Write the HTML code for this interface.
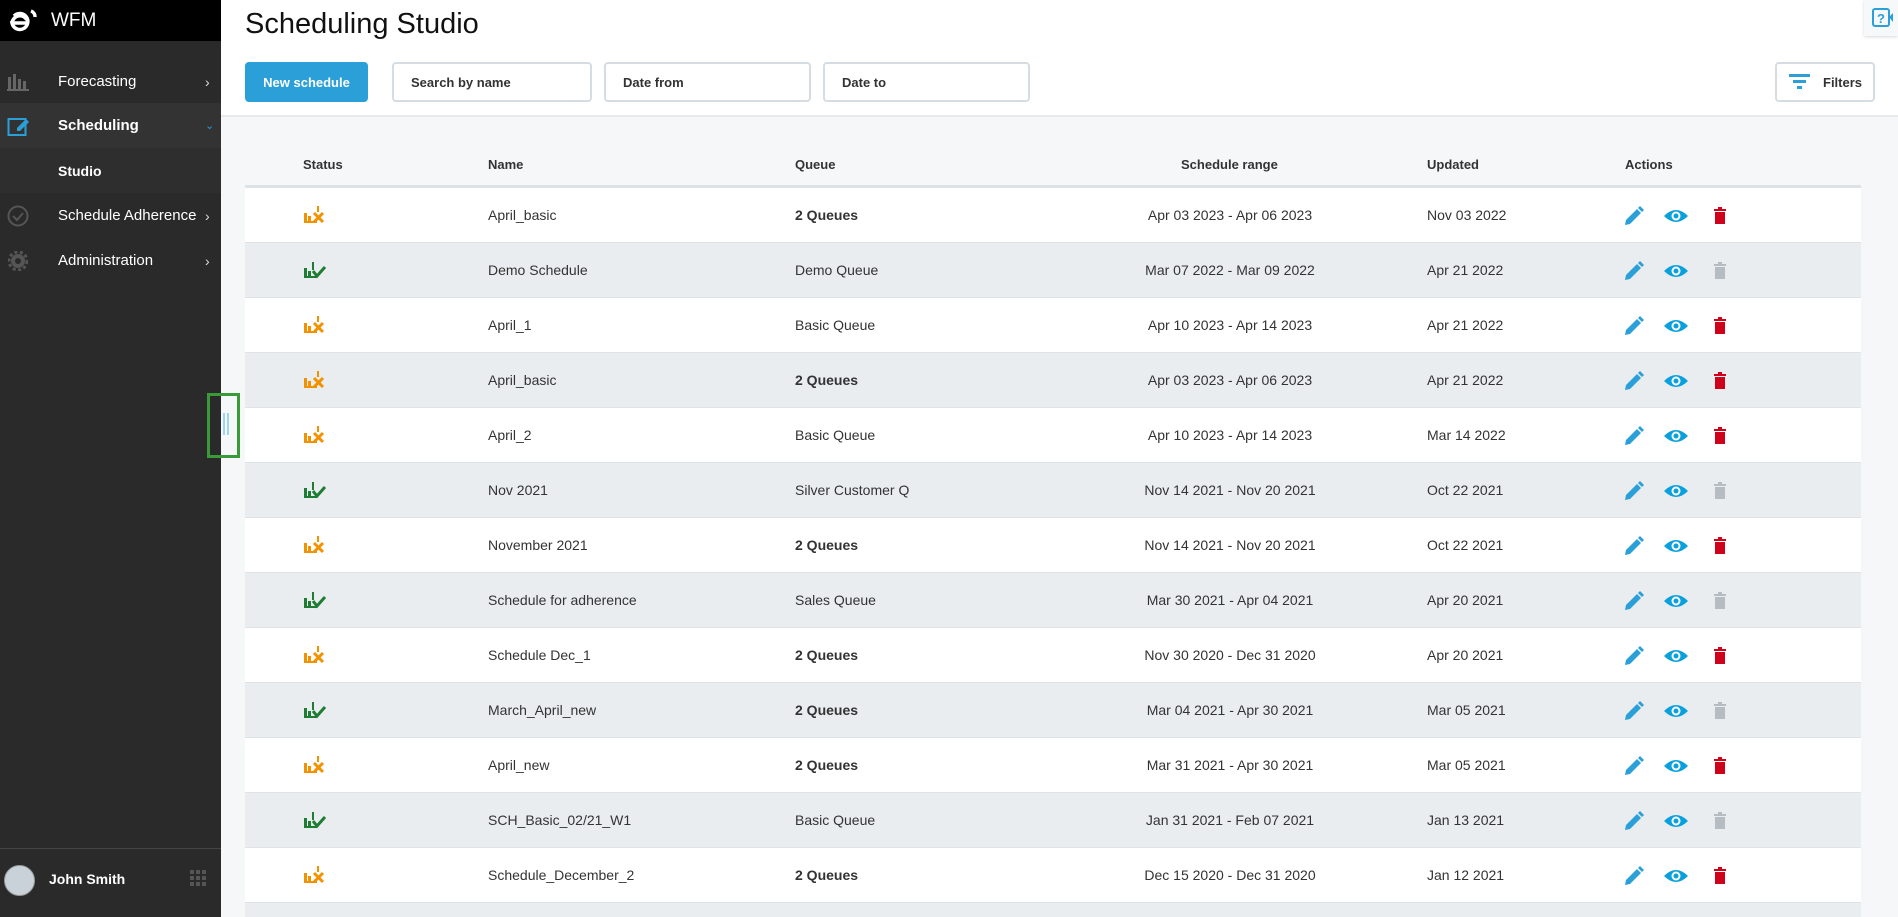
<!DOCTYPE html>
<html style="width:1898px;height:917px;overflow:hidden"><head><meta charset="utf-8"><style>
*{box-sizing:border-box;margin:0;padding:0}
body{width:1898px;height:917px;overflow:hidden;font-family:"Liberation Sans",sans-serif;background:#fff;position:relative;color:#333}
.sb{position:absolute;left:0;top:0;width:221px;height:917px;background:#2a2a2a;color:#fff;z-index:2}
.logo{height:41px;background:#000;position:relative}
.logo .t{position:absolute;left:51px;top:10px;font-size:19px;color:#fff}
.item{position:absolute;left:0;width:221px;height:45px;font-size:15px;display:flex;align-items:center}
.item .l{position:absolute;left:58px}
.item .ch{position:absolute;left:205px;font-size:14px;color:#ddd}
.main{position:absolute;left:221px;top:0;right:0;height:917px;overflow:hidden}
h1{position:absolute;left:24px;top:8px;font-weight:400;font-size:29px;color:#111}
.btn{position:absolute;top:62px;height:40px;border-radius:4px;font-size:13px;font-weight:bold;display:flex;align-items:center}
.inp{border:2px solid #d5dde2;color:#333;padding-left:17px;background:#fff}
.content{position:absolute;left:0;top:115px;right:0;bottom:0;background:#f5f7f9;border-top:2px solid #e6eaed;overflow:hidden}
.tbl{position:absolute;left:24px;top:0;width:1616px}
.hd{position:relative;height:71px;border-bottom:3px solid #dde2e6;font-size:13px;font-weight:bold;color:#333}
.hd span,.row span{position:absolute}
.hd span{top:40px}
.row{position:relative;height:55px;border-bottom:1px solid #dfe3e6;background:#fff;font-size:14px;color:#333}
.row.g{background:#e9edf0}
.row span{top:19px}
</style></head><body>
<div class="sb">
 <div class="logo">
  <svg style="position:absolute;left:7px;top:8px" width="30" height="26" viewBox="0 0 30 26"><path d="M20 15H5a8 8 0 1 0 2-7" fill="none" stroke="#fff" stroke-width="3.5"/><path d="M5 15 a8 8 0 0 1 15-3" fill="none" stroke="#fff" stroke-width="3.5"/><path d="M24 3a6 6 0 0 1 4 6" fill="none" stroke="#fff" stroke-width="3.5"/></svg>
  <span class="t">WFM</span></div>
 <div class="item" style="top:59px"><svg style="position:absolute;left:7px" width="22" height="18"><g fill="#666"><rect x="1" y="4" width="3" height="12"/><rect x="6" y="1" width="3" height="15"/><rect x="11" y="6" width="3" height="10"/><rect x="16" y="8" width="3" height="8"/><rect x="0" y="16" width="22" height="2"/></g></svg><span class="l">Forecasting</span><span class="ch">›</span></div>
 <div class="item" style="top:103px;background:#333"><svg style="position:absolute;left:7px" width="24" height="22"><rect x="1.5" y="4" width="17" height="16" fill="none" stroke="#2a9fd8" stroke-width="2"/><path d="M10 13l9-9 3 3-9 9h-3z" fill="#2a9fd8"/></svg><span class="l" style="font-weight:bold">Scheduling</span><span class="ch" style="color:#2a9fd8;font-size:11px">⌄</span></div>
 <div class="item" style="top:148px;background:#2e2e2e"><span class="l" style="font-weight:bold;font-size:14px">Studio</span></div>
 <div class="item" style="top:193px"><svg style="position:absolute;left:7px" width="22" height="22"><circle cx="11" cy="11" r="9.5" fill="none" stroke="#555" stroke-width="2"/><path d="M6 11l4 4 6-7" fill="none" stroke="#555" stroke-width="2"/></svg><span class="l">Schedule Adherence</span><span class="ch">›</span></div>
 <div class="item" style="top:238px"><svg style="position:absolute;left:8px" width="20" height="20"><circle cx="10" cy="10" r="7" fill="#555"/><circle cx="10" cy="10" r="9" fill="none" stroke="#555" stroke-width="3" stroke-dasharray="3 2.5"/><circle cx="10" cy="10" r="3" fill="#2a2a2a"/></svg><span class="l">Administration</span><span class="ch">›</span></div>
 <div style="position:absolute;left:0;top:848px;width:221px;border-top:1px solid #444;height:69px">
  <div style="position:absolute;left:4px;top:16px;width:31px;height:31px;border-radius:50%;background:#c9d2d8;border:1px solid #999"></div>
  <span style="position:absolute;left:49px;top:22px;font-size:14px;font-weight:bold">John Smith</span>
  <svg style="position:absolute;left:190px;top:21px" width="18" height="18"><g fill="#555"><rect x="0" y="0" width="4" height="4"/><rect x="6" y="0" width="4" height="4"/><rect x="12" y="0" width="4" height="4"/><rect x="0" y="6" width="4" height="4"/><rect x="6" y="6" width="4" height="4"/><rect x="12" y="6" width="4" height="4"/><rect x="0" y="12" width="4" height="4"/><rect x="6" y="12" width="4" height="4"/><rect x="12" y="12" width="4" height="4"/></g></svg>
 </div>
</div>
<div class="main">
 <h1>Scheduling Studio</h1>
 <div class="btn" style="left:24px;width:123px;background:#2a9fd8;color:#fff;justify-content:center">New schedule</div>
 <div class="btn inp" style="left:171px;width:200px">Search by name</div>
 <div class="btn inp" style="left:383px;width:207px">Date from</div>
 <div class="btn inp" style="left:602px;width:207px">Date to</div>
 <div class="btn inp" style="left:1554px;width:100px;padding-left:12px"><svg width="22" height="16" style="margin-right:12px"><g fill="#2a9fd8"><rect x="0" y="0" width="21" height="3"/><rect x="4" y="6" width="13" height="3"/><rect x="8" y="12" width="5" height="3"/></g></svg>Filters</div>
 <div style="position:absolute;right:0;top:0;width:34px;height:36px;background:#f7f8f9;box-shadow:0 1px 3px rgba(0,0,0,.15)"><svg style="position:absolute;left:8px;top:8px" width="22" height="20"><rect x="1" y="1" width="16" height="17" rx="2" fill="none" stroke="#2a9fd8" stroke-width="2"/><text x="5" y="15" font-size="13" font-weight="bold" fill="#2a9fd8" font-family="Liberation Sans">?</text><path d="M17 9l4-4v9z" fill="#2a9fd8"/></svg></div>
 <div class="content"><div class="tbl" id="t">
  <div class="hd"><span style="left:58px">Status</span><span style="left:243px">Name</span><span style="left:550px">Queue</span><span style="left:936px">Schedule range</span><span style="left:1182px">Updated</span><span style="left:1380px">Actions</span></div>
 </div></div>
</div>
<div style="position:absolute;left:207px;top:393px;width:33px;height:65px;border:3px solid #3a9a3a;z-index:3;background:linear-gradient(90deg,transparent 11px,#f5f7f9 11px)"><div style="position:absolute;left:13px;top:17px;width:2px;height:22px;background:#9cd6f2"></div><div style="position:absolute;left:17px;top:17px;width:2px;height:22px;background:#9cd6f2"></div></div>
<script>
const R=[["o","April_basic","2 Queues","Apr 03 2023 - Apr 06 2023","Nov 03 2022"],["g","Demo Schedule","Demo Queue","Mar 07 2022 - Mar 09 2022","Apr 21 2022"],["o","April_1","Basic Queue","Apr 10 2023 - Apr 14 2023","Apr 21 2022"],["o","April_basic","2 Queues","Apr 03 2023 - Apr 06 2023","Apr 21 2022"],["o","April_2","Basic Queue","Apr 10 2023 - Apr 14 2023","Mar 14 2022"],["g","Nov 2021","Silver Customer Q","Nov 14 2021 - Nov 20 2021","Oct 22 2021"],["o","November 2021","2 Queues","Nov 14 2021 - Nov 20 2021","Oct 22 2021"],["g","Schedule for adherence","Sales Queue","Mar 30 2021 - Apr 04 2021","Apr 20 2021"],["o","Schedule Dec_1","2 Queues","Nov 30 2020 - Dec 31 2020","Apr 20 2021"],["g","March_April_new","2 Queues","Mar 04 2021 - Apr 30 2021","Mar 05 2021"],["o","April_new","2 Queues","Mar 31 2021 - Apr 30 2021","Mar 05 2021"],["g","SCH_Basic_02/21_W1","Basic Queue","Jan 31 2021 - Feb 07 2021","Jan 13 2021"],["o","Schedule_December_2","2 Queues","Dec 15 2020 - Dec 31 2020","Jan 12 2021"],["g","","","",""]];
let h="";
R.forEach((r,i)=>{const c=r[0]=="o"?"#f39200":"#1e7d32";
const st=r[1]?`<svg style="position:absolute;left:59px;top:18px" width="22" height="18"><g fill="${c}"><rect x="0" y="7" width="3" height="8"/><rect x="4" y="10" width="3" height="5"/><rect x="0" y="15" width="13" height="2"/></g>${r[0]=="o"?`<path d="M10 7l9 9M19 7l-9 9" stroke="${c}" stroke-width="3"/><path d="M14 0v6" stroke="${c}" stroke-width="2"/>`:`<path d="M9 10l4 5 8-9" fill="none" stroke="${c}" stroke-width="3"/><rect x="8" y="1" width="2" height="8" fill="${c}"/>`}</svg>`:"";
const tc=r[0]=="o"?"#d0021b":"#b5bcc2";
const act=r[1]?`<svg style="position:absolute;left:1379px;top:18px" width="110" height="20"><path d="M1 19l1-5 11-11 4 4-11 11z" fill="#2a9fd8"/><path d="M14 2l2-2 4 4-2 2z" fill="#2a9fd8"/><path d="M40 10q12-12 24 0q-12 12-24 0z" fill="#0aa0dc"/><circle cx="52" cy="10" r="4.5" fill="#fff"/><circle cx="52" cy="10" r="2.5" fill="#0aa0dc"/><rect x="90" y="3" width="12" height="2" fill="${tc}"/><rect x="94" y="1" width="4" height="2" fill="${tc}"/><rect x="91" y="6" width="10" height="12" fill="${tc}"/></svg>`:"";
h+=`<div class="row ${i%2?"g":""}">${st}<span style="left:243px">${r[1]}</span><span style="left:550px;${r[2]=="2 Queues"?"font-weight:bold":""}">${r[2]}</span><span style="left:896px;width:178px;text-align:center">${r[3]}</span><span style="left:1182px">${r[4]}</span>${act}</div>`;});
document.getElementById("t").insertAdjacentHTML("beforeend",h);
</script>
</body></html>
